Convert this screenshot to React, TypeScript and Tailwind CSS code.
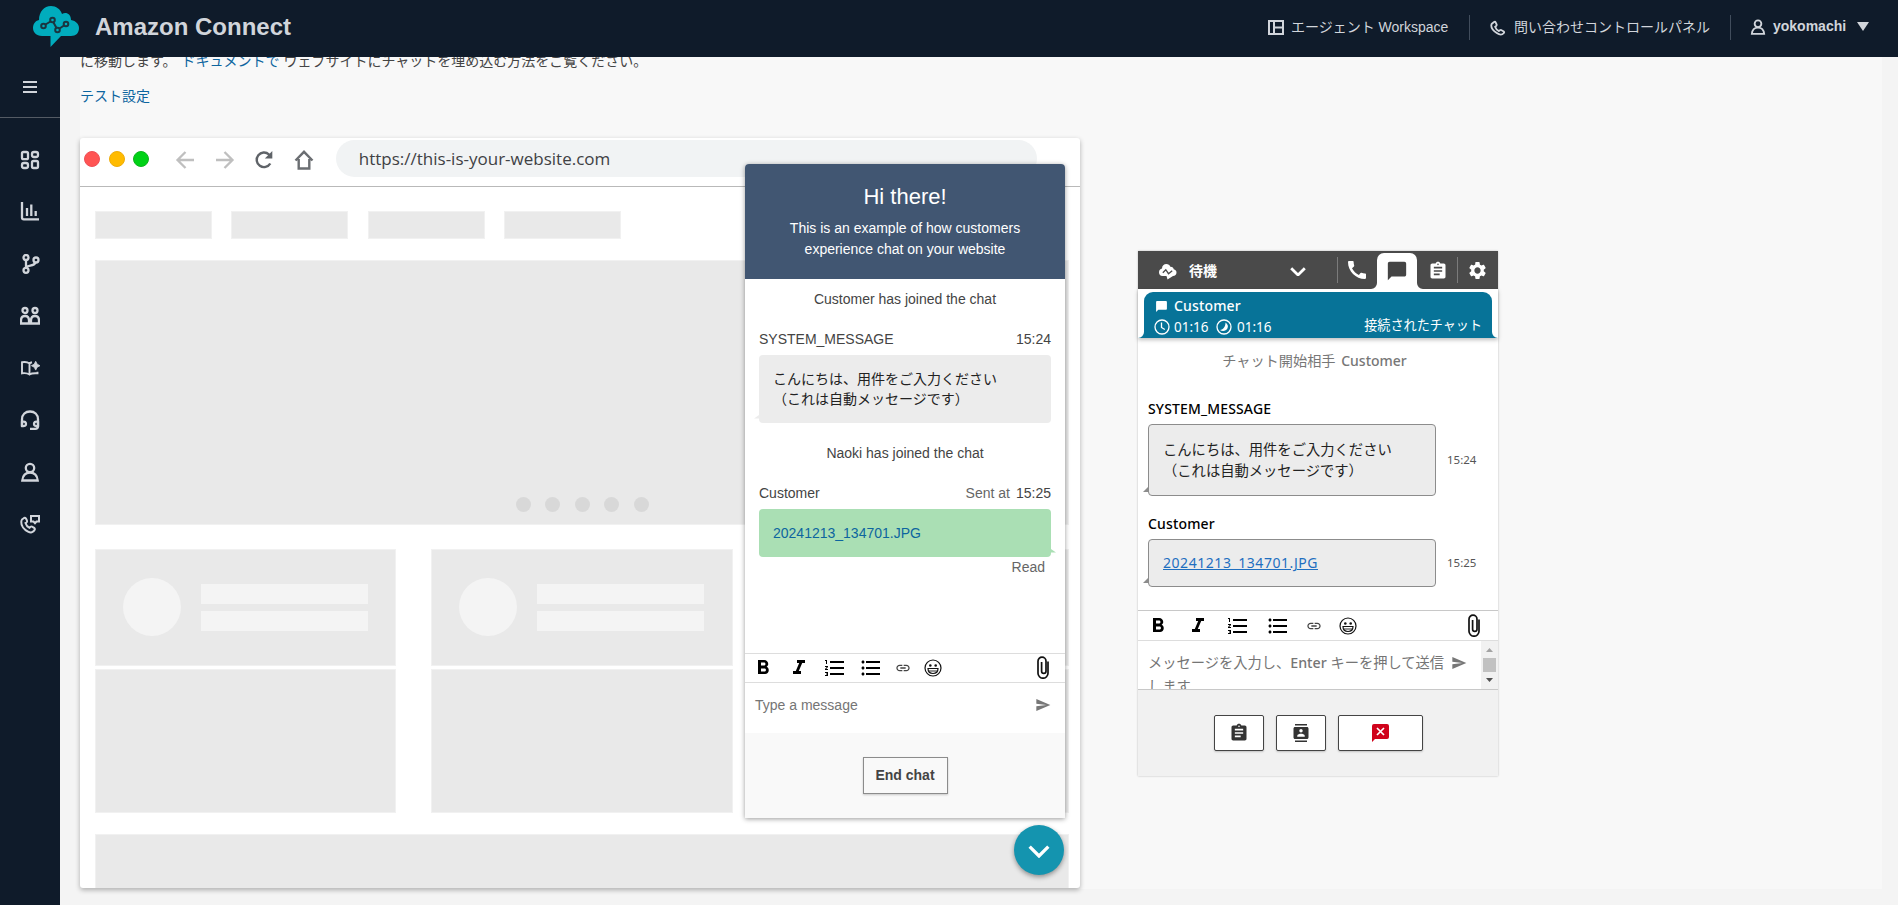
import type { ReactNode } from "react";
import {
  MdAssignment,
  MdCall,
  MdChatBubble,
  MdContacts,
  MdFormatBold,
  MdFormatItalic,
  MdFormatListBulleted,
  MdFormatListNumbered,
  MdLink,
  MdSend,
  MdSettings,
} from "react-icons/md";

const LineIcon = ({
  children,
  width = 20,
  className = "",
}: {
  children: ReactNode;
  width?: number;
  className?: string;
}) => (
  <svg
    width={width}
    height={width}
    viewBox="0 0 20 20"
    fill="none"
    stroke="currentColor"
    strokeWidth="2.3"
    className={`shrink-0 ${className}`}
  >
    {children}
  </svg>
);

const LogoIcon = () => (
  <svg width="48" height="43" viewBox="32 7 48 43" className="shrink-0 overflow-visible">
    <path
      d="M42 36C36 36 33 32 33 28c0-4 2-7 6-8C39 12 44 6 51 6c5 0 9.500 3 11 8 4-2.500 9 0 9 6 5 1 8 4 8 8 0 5-3 8-8 8H61L50.500 47V36Z"
      fill="#01acbd"
    />
    <g fill="none" stroke="#1a3540" strokeWidth="2">
      <path d="m45.500 24.500 5-3M53.500 22.500l3 5.500M59.500 28.500l4.500-3" />
      <circle cx="43.500" cy="26" r="2.300" />
      <circle cx="52.500" cy="20" r="2.300" />
      <circle cx="57.500" cy="30" r="2.300" />
      <circle cx="66" cy="24" r="2.300" />
    </g>
  </svg>
);

const PersonPaths = () => (
  <>
    <circle cx="10" cy="6" r="4.200" />
    <path d="M2.300 18.500h15.400c-.5-5-3.500-7.800-7.700-7.800s-7.200 2.800-7.700 7.800Z" />
  </>
);

const navIcons: ReactNode[] = [
  <LineIcon>
    <rect x="2" y="2" width="6" height="7.200" rx="1.500" />
    <rect x="12" y="2" width="6" height="5" rx="2" />
    <rect x="2" y="13" width="6" height="5" rx="2" />
    <rect x="12" y="11" width="6" height="7" rx="1.500" />
  </LineIcon>,
  <LineIcon>
    <path d="M2 0v15.500q0 1.800 1.800 1.800H19M7 6v8M11.300 2.500V14M15.700 9v5" />
  </LineIcon>,
  <LineIcon>
    <circle cx="6" cy="3.500" r="2.500" />
    <circle cx="16" cy="6" r="2.500" />
    <circle cx="6" cy="16.300" r="2.500" />
    <path d="M6 6v8M6.500 13.800c1-3 7.500-1 9-5.300" />
  </LineIcon>,
  <LineIcon>
    <circle cx="5" cy="4.500" r="2.500" />
    <circle cx="15" cy="4.500" r="2.500" />
    <path d="M1 17.500v-3c0-3 1.500-4.500 4-4.500s4 1.500 4 4.500v3ZM11 17.500v-3c0-3 1.500-4.500 4-4.500s4 1.500 4 4.500v3ZM1 17.500h18" />
  </LineIcon>,
  <LineIcon>
    <path d="M9.500 5.500C7.500 4 5 3.800 2 4.300v11c3-.5 5.500-.2 7.500 1.200 2-1.400 4-1.500 8-1.200v-1.500M9.500 5.500v11M9.500 5.500c.8-.7 1.600-1 2.500-1.200" strokeWidth="1.900" />
    <path d="m15.700 3.300 1.500 2.900 2.800 1.500-2.800 1.500-1.500 2.900-1.500-2.900-2.800-1.500 2.800-1.500Z" fill="currentColor" strokeWidth="0.8" />
  </LineIcon>,
  <LineIcon>
    <path d="M2 16V9.500C2 4.500 5.500 1.500 10 1.500s8 3 8 8V16q0 2.800-2.800 2.800H10" />
    <path d="M2 12c3-1 4 .3 4 2s-1.500 2.500-4 2ZM18 12c-3-1-4 .3-4 2s1.500 2.500 4 2Z" />
  </LineIcon>,
  <LineIcon>
    <PersonPaths />
  </LineIcon>,
  <LineIcon>
    <path d="M2 5.500 4 4q1.200-.5 2 .6l1 2q.5 1.200-.7 2L5.500 9q1 3.500 4 4.800l1-1q1-.7 2 0l2 1.300q.8.8.2 1.700c-1.500 3-4 3.200-6.700 1.800C4 15.500 1 11.500 1.300 8q0-1.500.7-2.500Z" strokeWidth="2" />
    <path d="M11 2h8v5.500h-2.500L15 9.200l-1.500-1.700H11Z" strokeWidth="2" />
  </LineIcon>,
];

const SmileIcon = () => (
  <svg width="18" height="18" viewBox="0 0 18 18" className="ml-px shrink-0" fill="none" stroke="#111" strokeWidth="1.200">
    <circle cx="9" cy="9" r="8" />
    <circle cx="6.300" cy="6.500" r="1.300" fill="#111" stroke="none" />
    <circle cx="11.700" cy="6.500" r="1.300" fill="#111" stroke="none" />
    <path d="M4 9.500h10c0 3-2 5-5 5s-5-2-5-5Z" />
    <path d="M4.800 12h8.400" strokeWidth="0.900" />
  </svg>
);

const ClipIcon = () => (
  <svg width="12" height="23" viewBox="0 0 12 23" className="mb-px shrink-0" fill="none" stroke="#111" strokeWidth="1.700">
    <path d="M11 5.500v11.700a5 5 0 0 1-10 0V5.200a4 4 0 0 1 8 0v10a2.200 2.200 0 0 1-4.400 0V6" />
  </svg>
);

const FormatToolbar = ({ className }: { className: string }) => (
  <div className={`flex items-center text-black ${className}`}>
    <MdFormatBold size={24} className="shrink-0" />
    <MdFormatItalic size={24} className="shrink-0" />
    <MdFormatListNumbered size={24} className="shrink-0" />
    <MdFormatListBulleted size={24} className="shrink-0" />
    <MdLink size={16} className="shrink-0 text-[#444]" />
    <SmileIcon />
    <span className="grow" />
    <ClipIcon />
  </div>
);

const ChevronDown = ({ width, stroke }: { width: number; stroke: number }) => (
  <svg width={width} height={width * 0.6} viewBox="0 0 20 12" fill="none" stroke="white" strokeWidth={stroke}>
    <path d="m1.500 1.500 8.500 8.500 8.500-8.500" />
  </svg>
);

const TopBar = () => (
  <header className="flex h-[57px] shrink-0 items-center bg-[#0f1b2a] pl-8 text-[#d1d5db]">
    <LogoIcon />
    <h1 className="ml-[15px] pb-1 text-[24px] leading-8 font-bold">Amazon Connect</h1>
    <div className="mb-[2px] ml-auto flex h-[26px] items-center pr-[29px] text-[14px]">
      <svg width="16" height="15" viewBox="0 0 16 15" fill="none" stroke="currentColor" strokeWidth="2">
        <path d="M1 1h14v13H1ZM6 1v13M6 7.500h9" />
      </svg>
      <span className="ml-[7px] w-[158px] whitespace-nowrap">エージェント Workspace</span>
      <span className="ml-5 h-[25px] w-px bg-[#414d5c]" />
      <LineIcon width={16} className="ml-5">
        <path d="M2 5 5 2.500q1.500-.7 2.200.7l1 2.300q.5 1.300-.8 2.200l-1 .8c.8 2.500 2.300 4.300 4.800 5.300l1.200-1q1.100-.8 2.200 0l2.500 1.500q1 1 .2 2-3.300 4-8.800 0C3 12.500.5 9 2 5Z" />
      </LineIcon>
      <span className="ml-2 w-[196px] whitespace-nowrap">問い合わせコントロールパネル</span>
      <span className="ml-[20px] h-[25px] w-px bg-[#414d5c]" />
      <LineIcon width={16} className="mb-[2px] ml-[19px]">
        <PersonPaths />
      </LineIcon>
      <span className="mb-[2px] ml-[7px] w-[75px] font-bold">yokomachi</span>
      <svg width="12" height="9" viewBox="0 0 12 9" className="mb-[2px] ml-[9px]">
        <path d="M0 0h12L6 9Z" fill="currentColor" />
      </svg>
    </div>
  </header>
);

const SideNav = () => (
  <nav className="flex w-[60px] shrink-0 flex-col bg-[#0f1b2a] text-[#d1d5db]">
    <div className="flex h-[61px] items-center justify-center border-b border-[#545b64]">
      <svg width="14" height="12" viewBox="0 0 14 12" stroke="currentColor" strokeWidth="2" className="mb-px">
        <path d="M0 1h14M0 6h14M0 11h14" />
      </svg>
    </div>
    <div className="flex flex-col items-center gap-8 pt-8">
      {navIcons.map((icon, i) => (
        <div key={i}>{icon}</div>
      ))}
    </div>
  </nav>
);

const BrowserChrome = () => (
  <div className="flex h-[49px] items-start border-b border-[#b9b9b9] pl-[4px]">
    <div className="flex gap-[8.500px] pt-[13px]">
      <span className="size-[16px] rounded-full border border-[#ee4f57] bg-[#ff5453]" />
      <span className="size-[16px] rounded-full border border-[#eeac0a] bg-[#ffbb00]" />
      <span className="size-[16px] rounded-full border border-[#0fb41e] bg-[#00d216]" />
    </div>
    <div className="flex items-center gap-[19.600px] pt-[12px] pl-[26px]">
      <LineIcon className="text-[#bfbfbf]">
        <path d="M19 10H3M10.500 2 2.500 10l8 8" />
      </LineIcon>
      <LineIcon className="text-[#bfbfbf]">
        <path d="M1 10h16M9.500 2l8 8-8 8" />
      </LineIcon>
      <LineIcon className="text-[#5f6368]">
        <path d="M16.300 13.500A7.300 7.300 0 1 1 15 4.500l2 2" strokeWidth="2.400" />
        <path d="M18.300 1v7.500h-7.500Z" fill="currentColor" stroke="none" />
      </LineIcon>
      <LineIcon className="text-[#6b6e72]">
        <path d="M1.500 10.500 10 1.800l8.500 8.700M4.700 9v9.500h10.600V9" strokeWidth="2.400" />
      </LineIcon>
    </div>
    <div className="mt-[2px] ml-[22px] flex h-[37px] w-[701px] items-center rounded-full bg-[#f1f3f4] pl-[23px] font-['Open_Sans',sans-serif] text-[17px] text-[#404144]">
      <span className="pt-px">https://this-is-your-website.com</span>
    </div>
  </div>
);

const PlaceholderCard = () => (
  <div className="w-[302px]">
    <div className="flex h-[117px] items-center border border-[#f1f1f1] bg-[#e9e9e9] pl-[27px]">
      <span className="mb-px size-[58px] rounded-full bg-[#f4f4f4]" />
      <div className="mb-px ml-[20px] flex flex-col gap-[7px]">
        <span className="h-[20px] w-[167px] bg-[#f4f4f4]" />
        <span className="h-[20px] w-[167px] bg-[#f4f4f4]" />
      </div>
    </div>
    <div className="mt-[3px] h-[144px] border border-[#f1f1f1] bg-[#e9e9e9]" />
  </div>
);

const BrowserMock = () => (
  <div className="relative h-[750px] w-[1000px] shrink-0 rounded-[3px] bg-white shadow-[0_2px_5px_rgba(0,0,0,0.3)]">
    <BrowserChrome />
    <div className="pt-[24px] pr-[11px] pl-[15px]">
      <div className="flex gap-[19.400px]">
        {[0, 1, 2, 3].map((i) => (
          <span key={i} className="h-[28px] w-[117px] border border-[#f1f1f1] bg-[#e9e9e9]" />
        ))}
      </div>
      <div className="mt-[21px] flex h-[265px] items-end justify-center gap-[14.500px] border border-[#f1f1f1] bg-[#e9e9e9] pb-[12px]">
        {[0, 1, 2, 3, 4].map((i) => (
          <span key={i} className="size-[15px] rounded-full bg-[#d8d8d8]" />
        ))}
      </div>
      <div className="mt-[24px] flex gap-[35px] overflow-hidden">
        <PlaceholderCard />
        <PlaceholderCard />
        <PlaceholderCard />
      </div>
      <div className="mt-[21px] h-[54px] border border-b-0 border-[#f1f1f1] bg-[#e9e9e9]" />
    </div>
    <ChatWidget />
    <button className="absolute right-[16px] bottom-[13px] flex size-[50px] items-center justify-center rounded-full bg-[#1494af] pt-[3px] shadow-[0_2px_5px_rgba(0,0,0,0.4)]">
      <ChevronDown width={22} stroke={3} />
    </button>
  </div>
);

const ChatWidget = () => (
  <div className="absolute top-[26px] left-[665px] flex h-[654px] w-[320px] flex-col rounded-t-[4px] bg-white text-[14px] leading-5 text-[#444] shadow-[0_1px_5px_rgba(0,0,0,0.4)]">
    <div className="h-[115px] rounded-t-[4px] bg-[#415672] pt-[19px] text-center text-white">
      <p className="text-[22px] leading-7">Hi there!</p>
      <p className="mt-[7px] leading-[21px]">
        This is an example of how customers
        <br />
        experience chat on your website
      </p>
    </div>
    <div className="h-[374px] px-[14px]">
      <p className="pt-[10px] text-center">Customer has joined the chat</p>
      <div className="mt-[20px] flex justify-between">
        <span>SYSTEM_MESSAGE</span>
        <span>15:24</span>
      </div>
      <div className="relative mt-[6px] h-[68px] rounded-[4px] bg-[#ececec] pt-[14px] pl-[14px] text-[#222]">
        こんにちは、用件をご入力ください
        <br />
        （これは自動メッセージです）
        <svg width="8" height="6" viewBox="0 0 8 6" className="absolute bottom-[4px] -left-[5px]">
          <path d="M0 5.500 8 0v5.500Z" fill="#ececec" />
        </svg>
      </div>
      <p className="mt-[20px] text-center">Naoki has joined the chat</p>
      <div className="mt-[20px] flex justify-between">
        <span>Customer</span>
        <span>
          <span className="mr-[6px] text-[#666]">Sent at</span>15:25
        </span>
      </div>
      <div className="relative mt-[6px] flex h-[48px] items-center rounded-[4px] bg-[#aadfb4] pl-[14px] text-[#0d659f]">
        20241213_134701.JPG
        <svg width="8" height="6" viewBox="0 0 8 6" className="absolute -right-[5px] bottom-[4px]">
          <path d="M8 5.500 0 0v5.500Z" fill="#aadfb4" />
        </svg>
      </div>
      <p className="pr-[6px] text-right text-[#666]">Read</p>
    </div>
    <FormatToolbar className="h-[30px] gap-[12px] border-y border-[#ddd] pr-[16px] pl-[6px]" />
    <div className="flex h-[50px] items-center justify-between pr-[14px] pb-[6px] pl-[10px] text-[#757575]">
      <span>Type a message</span>
      <MdSend size={16} className="text-[#777]" />
    </div>
    <div className="flex h-[85px] items-center justify-center bg-[#f9f9f9]">
      <button className="mb-[1px] h-[37px] w-[85px] border border-[#8c8c8c] bg-[#f9f9f9] font-bold shadow-[0_1px_2px_rgba(0,0,0,0.2)]">
        End chat
      </button>
    </div>
  </div>
);

const CcpMessage = ({
  sender,
  time,
  height,
  children,
}: {
  sender: string;
  time: string;
  height: string;
  children: ReactNode;
}) => (
  <div>
    <p className="font-medium tracking-[0.15px] text-black">{sender}</p>
    <div className="mt-[5px] flex items-center">
      <div
        className={`relative flex w-[288px] items-center rounded-[4px] border border-[#8c8c8c] bg-[#ececec] pb-px pl-[14px] text-[14.300px] leading-[21px] text-[#222] ${height}`}
      >
        <div>{children}</div>
        <svg width="5" height="5" viewBox="0 0 5 5" className="absolute bottom-[3px] -left-[6px]">
          <path d="M0 5 5 0v5Z" fill="#8c8c8c" />
        </svg>
      </div>
      <span className="ml-[11px] text-[11.500px] text-[#555]">{time}</span>
    </div>
  </div>
);

const CcpTabs = () => (
  <div className="flex h-[38px] items-center bg-[#4a4a4a] text-white">
    <svg width="19" height="17" viewBox="0 0 19 17" className="mt-[2px] ml-[20px]">
      <path d="M1 9.200c0-2 1.300-3.500 3-3.700C4 2.500 6 1 8.300 1c2 0 3.400 1 4 2.700 2-.2 3.200 1 3.400 2.500 1.800.4 2.800 1.600 2.800 3.300 0 2-1.400 3.500-3.500 3.500L9.500 16.500 8.500 13H4.500C2.300 13 1 11.500 1 9.200Z" fill="white" />
      <path d="m4.800 9.700 3-3 2.700 4 3.700-3" fill="none" stroke="#4a4a4a" strokeWidth="1.300" />
    </svg>
    <span className="mt-px ml-[12px] text-[14px] font-bold">待機</span>
    <span className="mt-[3px] ml-[73px] flex w-[16px]">
      <ChevronDown width={16} stroke={3.5} />
    </span>
    <span className="ml-[31px] h-[26px] w-px bg-[#7b7b7b]" />
    <MdCall size={24} className="ml-[7px]" />
    <div className="relative ml-[8px] flex h-[36px] w-[40px] items-center justify-center self-end rounded-t-[7px] bg-white text-[#444]">
      <MdChatBubble size={22} />
      <svg width="6" height="6" className="absolute bottom-0 -left-[6px]">
        <path d="M6 0v6H0a6 6 0 0 0 6-6" fill="white" />
      </svg>
      <svg width="6" height="6" className="absolute -right-[6px] bottom-0">
        <path d="M0 0v6h6a6 6 0 0 1-6-6" fill="white" />
      </svg>
    </div>
    <MdAssignment size={20} className="mt-[2px] ml-[11px]" />
    <span className="ml-[9px] h-[26px] w-px bg-[#7b7b7b]" />
    <MdSettings size={21} className="mt-px ml-[9px]" />
  </div>
);

const ContactBanner = () => (
  <div className="flex h-[49px] items-end bg-white shadow-[0_2px_4px_rgba(0,0,0,0.25)]">
    <svg width="6" height="6" className="shrink-0">
      <path d="M6 0v6H0a6 6 0 0 0 6-6" fill="#077398" />
    </svg>
    <div className="h-[46px] grow rounded-t-[9px] bg-[#077398] text-white">
      <div className="flex h-[25px] items-center pt-[3px] pl-[11px]">
        <MdChatBubble size={13} className="mt-px" />
        <span className="ml-[6px] font-medium tracking-[0.15px]">Customer</span>
      </div>
      <div className="flex h-[20px] items-center pl-[10px]">
        <svg width="16" height="16" viewBox="0 0 16 16" fill="none" stroke="white" strokeWidth="1.300">
          <circle cx="8" cy="8" r="7" />
          <path d="M7.500 3.500v5l3.300 2" />
        </svg>
        <span className="ml-[4px] w-[34px] text-[13.500px]">01:16</span>
        <svg width="16" height="16" viewBox="0 0 16 16" className="ml-[8px]">
          <circle cx="8" cy="8" r="7" fill="none" stroke="white" strokeWidth="1.300" />
          <path d="M9.500 3.500c2 1.500 3 3.500 2 5.700-1.300 2.800-5 3.500-7.500 1.800 3.500-.5 5.500-3.500 5.500-7.500Z" fill="white" />
        </svg>
        <span className="ml-[5px] text-[13.500px]">01:16</span>
        <span className="mr-[10px] ml-auto pb-[4px] text-[13.100px]">接続されたチャット</span>
      </div>
    </div>
    <svg width="6" height="6" className="shrink-0">
      <path d="M0 0v6h6a6 6 0 0 1-6-6" fill="#077398" />
    </svg>
  </div>
);

const ccpButton =
  "flex h-[36px] items-center justify-center rounded-[2px] border border-[#444] bg-white text-[#333] shadow-[0_1px_2px_rgba(0,0,0,0.2)]";

const ContactPanel = () => (
  <div className="mt-[113px] ml-[58px] h-[525px] w-[360px] shrink-0 bg-white font-['Noto_Sans','Noto_Sans_CJK_JP',sans-serif] text-[14px] leading-5 shadow-[0_0_2px_rgba(0,0,0,0.25)]">
    <CcpTabs />
    <ContactBanner />
    <div className="h-[272px] pl-[10px]">
      <p className="pt-[13px] pr-[17px] text-center text-[#777]">
        <span className="text-[14.200px]">チャット開始相手</span> <span className="ml-[2px] font-medium">Customer</span>
      </p>
      <div className="mt-[28px] flex flex-col gap-[18px]">
        <CcpMessage sender="SYSTEM_MESSAGE" time="15:24" height="h-[72px]">
          こんにちは、用件をご入力ください
          <br />
          （これは自動メッセージです）
        </CcpMessage>
        <CcpMessage sender="Customer" time="15:25" height="h-[48px]">
          <a className="text-[14px] tracking-[0.550px] text-[#1f6fc0] underline">20241213_134701.JPG</a>
        </CcpMessage>
      </div>
    </div>
    <FormatToolbar className="h-[31px] gap-[16px] border-y border-t-[#c8c8c8] border-b-[#ddd] pr-[18px] pl-[8px]" />
    <div className="flex h-[49px] overflow-hidden border-b border-[#c8c8c8]">
      <p className="w-[300px] pt-[10px] pl-[10px] text-[14.250px] leading-[24px] whitespace-nowrap text-[#757575]">
        メッセージを入力し、<span className="font-medium">Enter</span> キーを押して送信
        <br />
        します
      </p>
      <MdSend size={16} className="mt-[14px] ml-[13px] text-[#777]" />
      <div className="ml-auto flex w-[17px] flex-col items-center justify-between bg-[#f1f1f1] py-[7px]">
        <svg width="7" height="4">
          <path d="M0 4h7L3.500 0Z" fill="#a3a3a3" />
        </svg>
        <span className="h-[14px] w-[13px] bg-[#c1c1c1]" />
        <svg width="7" height="4">
          <path d="M0 0h7L3.500 4Z" fill="#505050" />
        </svg>
      </div>
    </div>
    <div className="flex h-[86px] justify-center gap-[12px] bg-[#f1f1f1] pt-[25px]">
      <button className={`w-[50px] ${ccpButton}`}>
        <MdAssignment size={20} />
      </button>
      <button className={`w-[50px] ${ccpButton}`}>
        <MdContacts size={18} />
      </button>
      <button className={`w-[85px] ${ccpButton}`}>
        <svg width="17" height="18" viewBox="0 0 17 18">
          <path d="M0 2q0-2 2-2h13q2 0 2 2v11q0 2-2 2H3l-3 3Z" fill="#d0021b" />
          <path d="m5 4 7 7M12 4l-7 7" stroke="white" strokeWidth="1.700" />
        </svg>
      </button>
    </div>
  </div>
);

const App = () => (
  <div className="flex h-[905px] w-full flex-col overflow-hidden font-['Liberation_Sans','Noto_Sans_CJK_JP',sans-serif]">
    <TopBar />
    <div className="flex min-h-0 grow">
      <SideNav />
      <main className="flex grow overflow-hidden bg-[#f4f4f4] pr-[16px] pl-[20px]">
        <div className="h-[832px] grow bg-[#f8f8f8] text-[14px] leading-5 text-[#444]">
          <p className="-mt-[6px] whitespace-nowrap">
            に移動します。 <a className="ml-px text-[#0d659f]">ドキュメントで</a> ウェブサイトにチャットを埋め込む方法をご覧ください。
          </p>
          <p className="mt-[15px] text-[#0d659f]">テスト設定</p>
          <div className="mt-[32px] flex">
            <BrowserMock />
            <ContactPanel />
          </div>
        </div>
      </main>
    </div>
  </div>
);

export default App;
